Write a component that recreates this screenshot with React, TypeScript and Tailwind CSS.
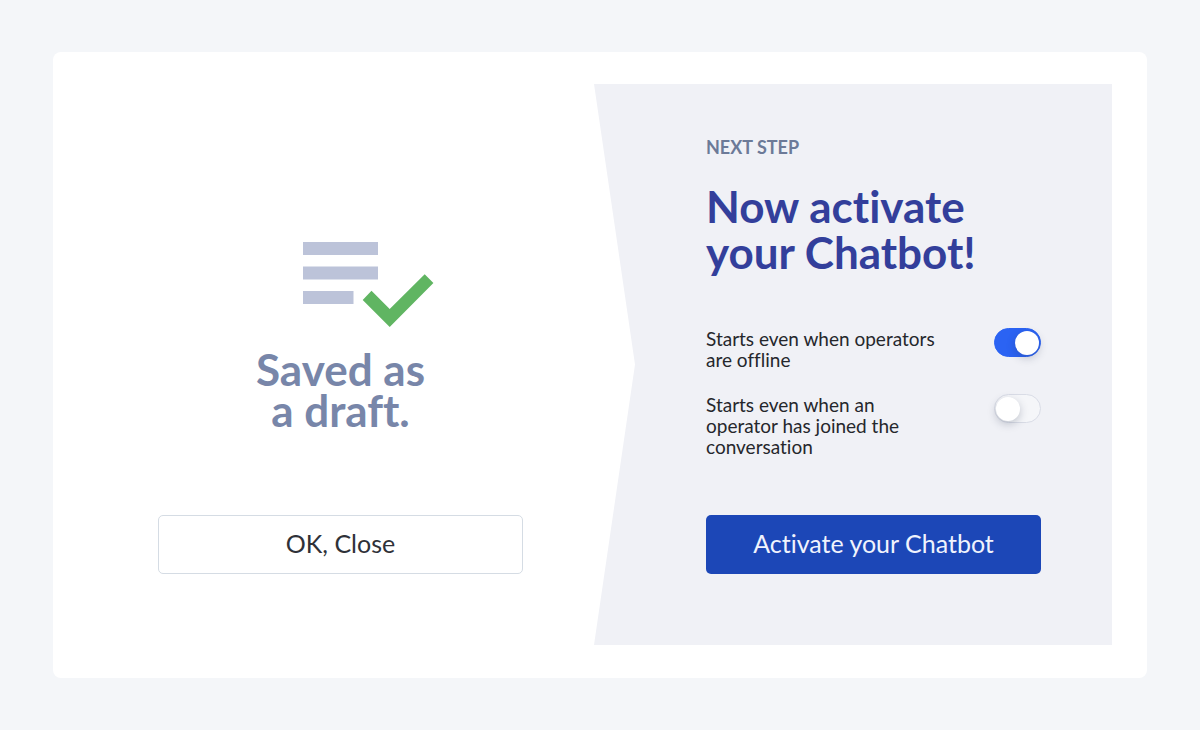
import { useState } from 'react'

interface ToggleRowProps {
  id: string
  label: string
  checked: boolean
  onChange: (checked: boolean) => void
}

export default function App() {
  const [whenOffline, setWhenOffline] = useState(true)
  const [whenJoined, setWhenJoined] = useState(false)

  return (
    <main className="min-h-screen bg-[#f4f6f9] px-[53px] py-[52px] font-['Lato',sans-serif] [font-variant-ligatures:none]">
      <div className="grid grid-cols-[541fr_518fr] rounded-lg bg-white pt-8 pr-[35px] pb-[33px]">
        <section className="flex flex-col items-center pt-[158px] pr-[71px] pb-[71px] pl-[105px]">
          <DraftIcon />
          <h1 className="mt-[22px] text-center text-[44px] leading-[41px] font-bold text-[#7886a9]">
            Saved as
            <br />a draft.
          </h1>
          <button
            type="button"
            className="mt-auto h-[59px] w-full rounded-[5px] border border-[#d5dce4] bg-white pb-[2px] text-[25px] text-[#2f3138]"
          >
            OK, Close
          </button>
        </section>

        <section className="flex flex-col bg-[#f0f1f6] pt-[53px] pr-[71px] pb-[71px] pl-28 [clip-path:polygon(0_0,100%_0,100%_100%,0_100%,41px_50%)]">
          <p className="text-lg leading-5 font-bold text-[#6c7a98]">NEXT STEP</p>
          <h2 className="mt-[26px] text-[44px] leading-[46px] font-bold text-[#333f9b]">
            Now activate
            <br />
            your Chatbot!
          </h2>
          <div className="mt-[53px] flex flex-col gap-6">
            <ToggleRow
              id="when-offline"
              label="Starts even when operators are offline"
              checked={whenOffline}
              onChange={setWhenOffline}
            />
            <ToggleRow
              id="when-joined"
              label="Starts even when an operator has joined the conversation"
              checked={whenJoined}
              onChange={setWhenJoined}
            />
          </div>
          <button
            type="button"
            className="mt-[58px] h-[59px] w-full rounded-[5px] bg-[#1c47b7] pb-[2px] text-[25px] text-[#f0f3fd]"
          >
            Activate your Chatbot
          </button>
        </section>
      </div>
    </main>
  )
}

function ToggleRow({ id, label, checked, onChange }: ToggleRowProps) {
  return (
    <div className="flex items-start justify-between">
      <label htmlFor={id} className="w-[236px] text-[19px] leading-[21px] text-[#25272c]">
        {label}
      </label>
      <input
        id={id}
        type="checkbox"
        role="switch"
        checked={checked}
        onChange={e => onChange(e.target.checked)}
        className="flex h-[29px] w-[47px] shrink-0 appearance-none items-center rounded-full border border-[#d9dce6] bg-[#f5f6f9] px-px before:h-6 before:w-6 before:rounded-full before:bg-white before:shadow-[0_3px_8px_rgba(40,50,80,0.25)] checked:justify-end checked:border-[#2b63f3] checked:bg-[#2b63f3]"
      />
    </div>
  )
}

// The bars are centred on the column; the tick hangs out to the right of them.
function DraftIcon() {
  return (
    <svg width="75" height="85" viewBox="0 0 75 85" className="overflow-visible" aria-hidden="true">
      <path d="M0 0H75V13H0ZM0 24.5H75V37.5H0ZM0 49H50.5V62H0Z" fill="#bcc3d9" />
      <path d="M59.7 58L68.5 48.8L86.7 67L121.7 32.3L130.4 41L86.7 85Z" fill="#60b562" />
    </svg>
  )
}
